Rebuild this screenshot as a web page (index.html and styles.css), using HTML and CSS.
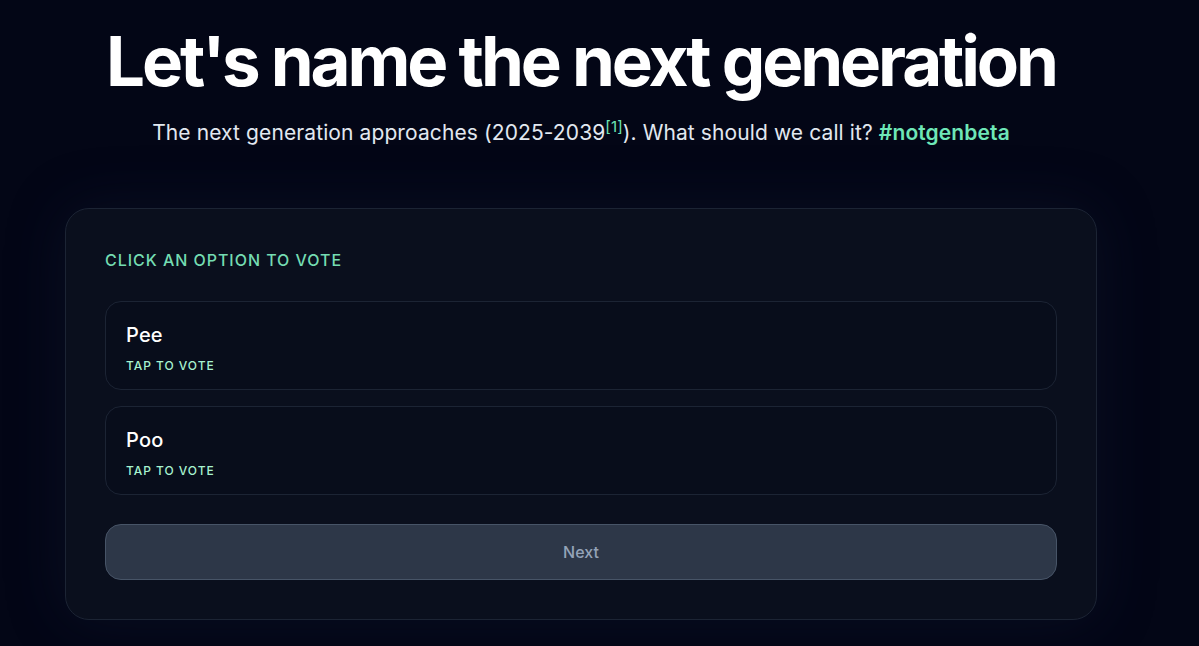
FILE: index.html
```html
<!DOCTYPE html>
<html lang="en">
<head>
<meta charset="utf-8">
<title>Let's name the next generation</title>
<link rel="stylesheet" href="styles.css">
</head>
<body>
<main class="page">
  <header class="hero">
    <h1 class="title">Let's name the next generation</h1>
    <p class="subtitle">The next generation approaches (2025-2039<sup class="ref">[1]</sup>). What should we call it? <span class="tag">#notgenbeta</span></p>
  </header>
  <section class="card">
    <div class="label">CLICK AN OPTION TO VOTE</div>
    <div class="options">
      <button class="option">
        <span class="opt-name">Pee</span>
        <span class="opt-hint">TAP TO VOTE</span>
      </button>
      <button class="option">
        <span class="opt-name">Poo</span>
        <span class="opt-hint">TAP TO VOTE</span>
      </button>
    </div>
    <button class="next">Next</button>
  </section>
</main>
</body>
</html>
```

FILE: styles.css
```css
* { box-sizing: border-box; }
html, body {
  margin: 0;
  padding: 0;
  background: #030616;
  height: 100%;
  overflow: hidden;
}
body {
  font-family: Inter, "Noto Sans", sans-serif;
  color: #f8fafc;
}
.page {
  width: 1162px;
  display: flex;
  flex-direction: column;
  align-items: center;
}
.hero {
  display: flex;
  flex-direction: column;
  align-items: center;
  padding-top: 21px;
}
.title {
  margin: 0;
  font-size: 69px;
  font-weight: 700;
  line-height: 80px;
  letter-spacing: -0.045em;
  color: #ffffff;
}
.subtitle {
  margin: 18px 0 0;
  font-size: 21px;
  line-height: 28px;
  letter-spacing: 0.005em;
  color: #e2e8f0;
  font-weight: 400;
}
.ref {
  font-size: 15px;
  color: #6ee7b7;
  line-height: 0;
  vertical-align: 8px;
}
.tag {
  color: #6ee7b7;
  font-weight: 600;
}
.card {
  margin-top: 61px;
  width: 1032px;
  background: #0a0f1d;
  border: 1px solid #1c2434;
  border-radius: 24px;
  padding: 40px 39px 39px;
  box-shadow: 0 0 60px rgba(30, 41, 70, 0.25);
  display: flex;
  flex-direction: column;
}
.label {
  font-size: 16px;
  font-weight: 500;
  letter-spacing: 0.06em;
  color: #74dcb2;
  line-height: 22px;
}
.options {
  margin-top: 30px;
  display: flex;
  flex-direction: column;
  gap: 16px;
}
.option {
  font-family: inherit;
  text-align: left;
  background: #080d1b;
  border: 1px solid #1c2434;
  border-radius: 16px;
  height: 89px;
  padding: 19px 20px 0;
  display: flex;
  flex-direction: column;
  align-items: flex-start;
  cursor: pointer;
}
.opt-name {
  font-size: 20px;
  font-weight: 500;
  color: #ffffff;
  line-height: 28px;
  letter-spacing: 0.01em;
}
.opt-hint {
  margin-top: 9px;
  font-size: 12px;
  font-weight: 500;
  letter-spacing: 0.08em;
  color: #a7f3d0;
  line-height: 16px;
}
.next {
  margin-top: 29px;
  font-family: inherit;
  height: 56px;
  border-radius: 16px;
  background: #2d3748;
  border: 1px solid #475467;
  color: #94a3b8;
  font-size: 16px;
  font-weight: 500;
  cursor: pointer;
}
```
